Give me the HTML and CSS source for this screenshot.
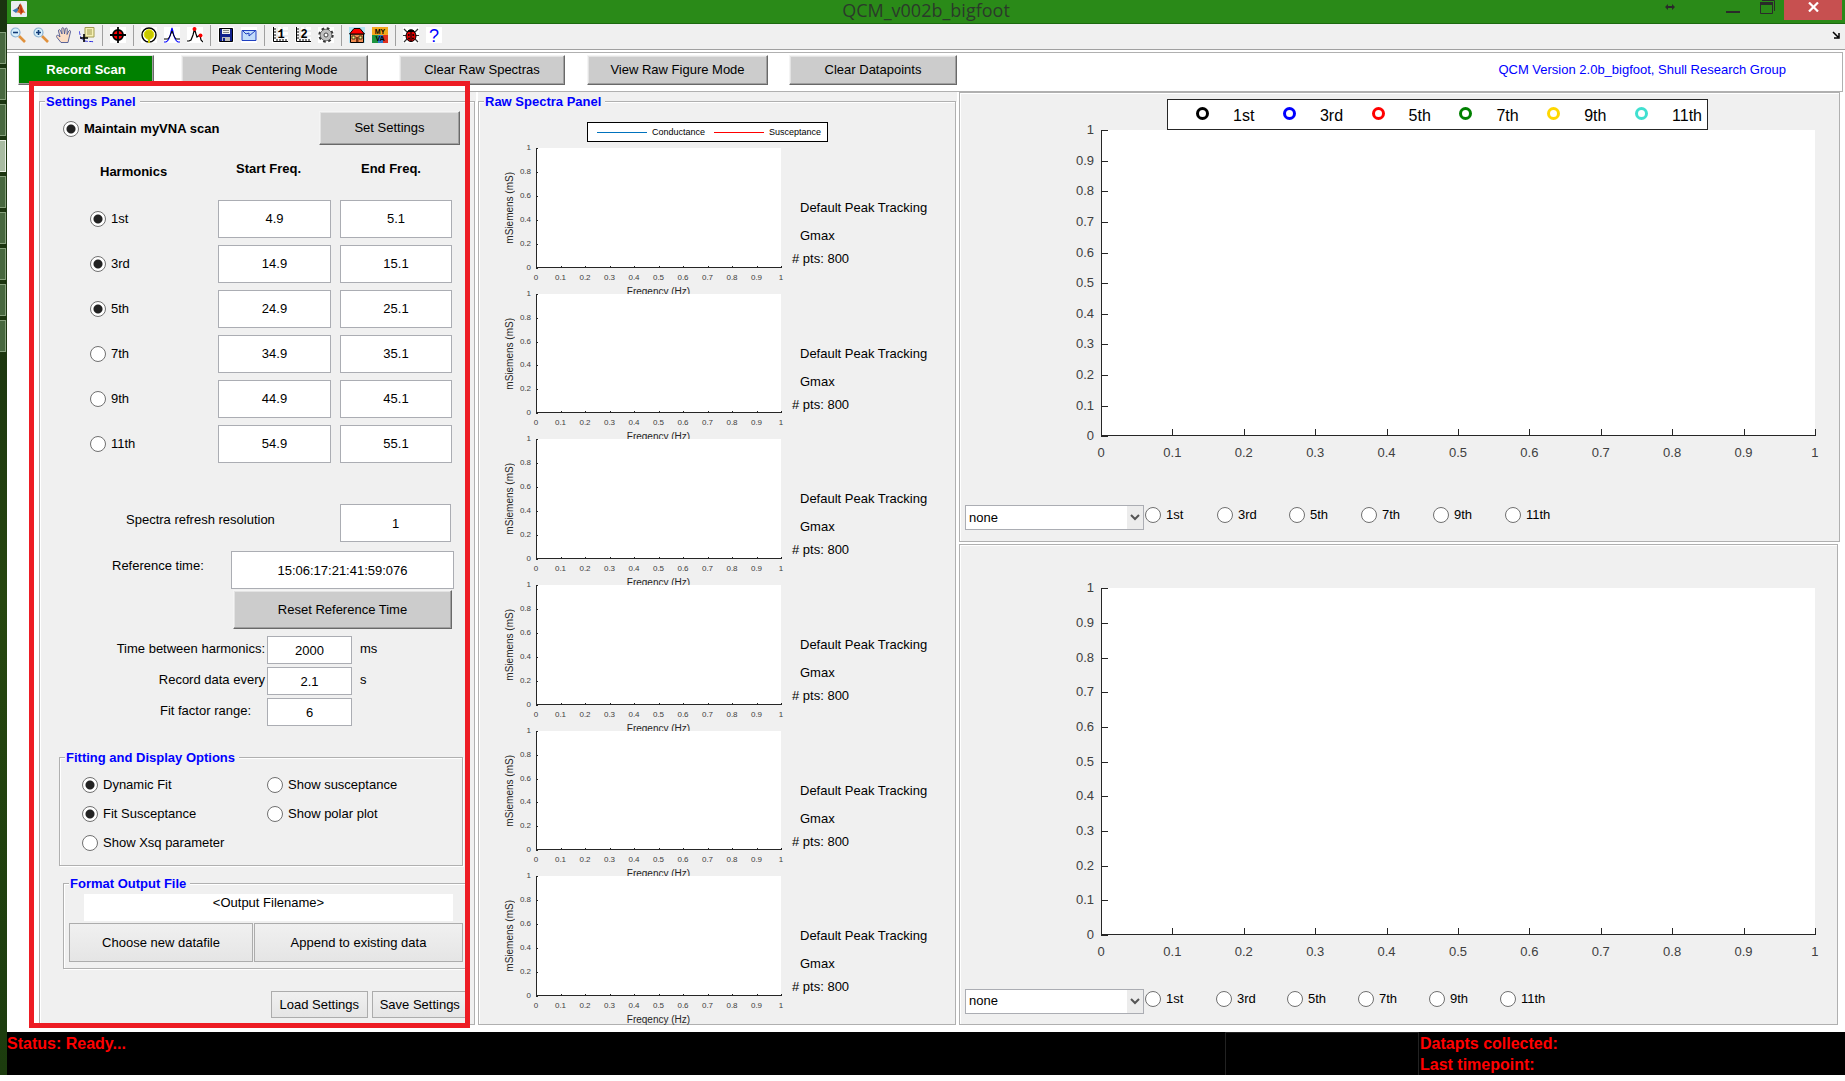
FILE: index.html
```html
<!DOCTYPE html>
<html lang="en">
<head>
<meta charset="utf-8">
<title>QCM_v002b_bigfoot</title>
<link rel="stylesheet" href="styles.css">
</head>
<body>
<div class="desktop">
  <div class="thumbs" aria-hidden="true">
    <span class="thumb"></span><span class="thumb"></span><span class="thumb"></span><span class="thumb thumb-active"></span><span class="thumb"></span><span class="thumb"></span><span class="thumb"></span><span class="thumb"></span><span class="thumb"></span>
  </div>
  <div class="window">
    <header class="titlebar">
      <svg class="app-icon" viewBox="0 0 16 16"><rect width="16" height="16" rx="1" fill="#e9eef3"/><path d="M1.500 9.500 6 7l2 2-3 3z" fill="#3c78b4"/><path d="M6 7c2-1 2-4 3.500-4.500L8 9z" fill="#5a2a20"/><path d="M9.500 2.500C11 4 12 9 14.500 12c-2-1-3-1-4.500 2-1-2-2-3-5-2 2-1 4-6 4.500-9.500z" fill="#e0651c"/><path d="M9.500 2.500C10.500 5 10.500 9 12 11c-1 0-2 1-2 3-.5-3-1-5-.5-11.500z" fill="#b5301a"/></svg>
      <h1 class="window-title">QCM_v002b_bigfoot</h1>
      <div class="window-controls">
        <svg class="resize-mark" viewBox="0 0 10 8"><path d="M0 4 3 1v2h4V1l3 3-3 3V5H3v2z" fill="#2a2a2a"/></svg>
        <button class="ctl" aria-label="Minimize"><svg width="14" height="14" viewBox="0 0 14 14"><path d="M0 12h14" stroke="#2a2a2a" stroke-width="2"/></svg></button>
        <button class="ctl" aria-label="Restore"><svg width="15" height="14" viewBox="0 0 15 14"><path d="M2 .5h12.500V11M.5 2.500h12v11H.5z" fill="none" stroke="#2a2a2a"/><path d="M0 3.500h13" stroke="#2a2a2a" stroke-width="3"/></svg></button>
        <button class="ctl ctl-close" aria-label="Close"><svg width="11" height="10" viewBox="0 0 11 10"><path d="m1 .5 9 9m0-9-9 9" stroke="#fff" stroke-width="2.200"/></svg></button>
      </div>
    </header>

    <div class="toolbar" role="toolbar" aria-label="Figure tools">
      <button class="tool" aria-label="Zoom out"><svg viewBox="0 0 16 16"><path d="m9 9 6 6" stroke="#e0913c" stroke-width="2.600"/><circle cx="5.500" cy="5.500" r="4.500" fill="#d9f0fb" stroke="#8ab0d0" stroke-width="1.200"/><path d="M3 5.500h5" stroke="#123c78" stroke-width="1.600"/></svg></button>
      <button class="tool" aria-label="Zoom in"><svg viewBox="0 0 16 16"><path d="m9 9 6 6" stroke="#e0913c" stroke-width="2.600"/><circle cx="5.500" cy="5.500" r="4.500" fill="#d9f0fb" stroke="#8ab0d0" stroke-width="1.200"/><path d="M3 5.500h5M5.500 3v5" stroke="#123c78" stroke-width="1.600"/></svg></button>
      <button class="tool" aria-label="Pan"><svg viewBox="0 0 16 16"><path d="M5 15.500 1 10.500c-1.500-2 .5-3 2-1.500L4 10 2.500 4c-.3-1.600 1.500-1.800 2-.5L6 7 5.800 1.800c0-1.500 1.900-1.500 2.100 0L8.500 7l.8-5c.3-1.400 2-1.200 2 .2L11 7.500l1.700-3.400c.7-1.300 2.200-.6 1.800.7L13 11l-1 4.500z" fill="#fbdcc4" stroke="#4a5690" stroke-width=".9"/></svg></button>
      <button class="tool" aria-label="Data cursor"><svg viewBox="0 0 16 16"><path d="M0 4c1 2 1 9 6 10s6 0 9 1" fill="none" stroke="#2a2ae0" stroke-dasharray="4 1.500"/><path d="M6 .5h9v9.500H6z" fill="#f5f0b4" stroke="#a09a50"/><path d="M8 3h5M8 5h5M8 7h5" stroke="#a09a50"/><path d="M5 7v8M1 11h8" stroke="#000" stroke-width="1.600"/></svg></button>
      <span class="sep"></span>
      <button class="tool tool-white" aria-label="Center peak"><svg viewBox="0 0 16 16"><circle cx="8" cy="8" r="5" fill="#f00" stroke="#000" stroke-width="1.800"/><path d="M8 0v16M0 8h16" stroke="#000" stroke-width="1.800"/></svg></button>
      <span class="sep"></span>
      <button class="tool tool-white" aria-label="Polar fit"><svg viewBox="0 0 16 16"><circle cx="8" cy="8" r="7" fill="#fff" stroke="#000" stroke-width="1.400"/><circle cx="8" cy="7.500" r="4.800" fill="#c8c800" stroke="#e6e600"/><path d="M8 10v6" stroke="#c8c800" stroke-width="2"/></svg></button>
      <button class="tool tool-white" aria-label="Show peak"><svg viewBox="0 0 16 16"><path d="M0 15h2c3-1 4-5 5-10l1-4 1 4c1 5 2 9 5 10h2" fill="none" stroke="#00f" stroke-width="1.200"/><path d="M0 12h4l2-3 2-5 2 5 2 3h4" fill="none" stroke="#000"/></svg></button>
      <button class="tool tool-white" aria-label="Find peaks"><svg viewBox="0 0 16 16"><path d="M0 14h2l2-1 2-5 1.500-6L9 7l1 3 1.500-1L13 8l1 5 2 2" fill="none" stroke="#000" stroke-width="1.200"/><circle cx="7.500" cy="2" r="2" fill="#f00"/><circle cx="13.500" cy="8.500" r="2" fill="#f00"/></svg></button>
      <span class="sep"></span>
      <button class="tool tool-white" aria-label="Save"><svg viewBox="0 0 16 16"><path d="M1.500 1.500h13v13h-13z" fill="#10208c" stroke="#000"/><path d="M4 2h8v5H4z" fill="#f0f0f0"/><path d="M5 3.500h6M5 5.500h6" stroke="#888"/><path d="M4 10h8v4H4z" fill="#bbb"/><path d="M5 11h2v3H5z" fill="#10208c"/></svg></button>
      <button class="tool tool-white" aria-label="Mail"><svg viewBox="0 0 16 16"><path d="M1 3.500h14v10H1z" fill="#c2dcfa" stroke="#2040c0"/><path d="m2 4 3 3 3-1 0 3 6-5" fill="none" stroke="#2040c0"/></svg></button>
      <span class="sep"></span>
      <button class="tool tool-white" aria-label="Axis 1"><svg viewBox="0 0 16 16"><path d="M5 0v13M10 0v13M2 4h14M2 9h14" stroke="#ddd"/><path d="M1.500 0v14.500H16M1 2h3M1 5h3M1 8h3M1 11h3M5 12v3M8 12v3M11 12v3M14 12v3" fill="none" stroke="#000"/><text x="9" y="11" class="ico-num">1</text></svg></button>
      <button class="tool tool-white" aria-label="Axis 2"><svg viewBox="0 0 16 16"><path d="M5 0v13M10 0v13M2 4h14M2 9h14" stroke="#ddd"/><path d="M1.500 0v14.500H16M1 2h3M1 5h3M1 8h3M1 11h3M5 12v3M8 12v3M11 12v3M14 12v3" fill="none" stroke="#000"/><text x="9" y="11" class="ico-num">2</text></svg></button>
      <button class="tool tool-white" aria-label="Options"><svg viewBox="0 0 16 16"><circle cx="8" cy="8" r="6.500" fill="none" stroke="#333" stroke-width="2.400" stroke-dasharray="2.600 2.500"/><circle cx="8" cy="8" r="5.800" fill="#c0c0c0" stroke="#555" stroke-width=".8"/><circle cx="8" cy="8" r="2" fill="#fff" stroke="#444"/></svg></button>
      <span class="sep"></span>
      <button class="tool" aria-label="Home"><svg viewBox="0 0 16 16"><path d="M0 0h16v16H0z" fill="#b4e4f4"/><path d="M1.500 7h13v8.500h-13z" fill="#f08c50" stroke="#000"/><path d="M.5 7 5 1.500h6L15.500 7z" fill="#f00" stroke="#000"/><path d="M3 9h3v3H3zm7 0h3v3h-3z" fill="#fff080" stroke="#000" stroke-width=".7"/><path d="M7 10h2.500v5H7z" fill="#7a3010"/></svg></button>
      <button class="tool" aria-label="myVNA"><svg viewBox="0 0 16 16"><path d="M0 0h16v8H0z" fill="#f5a81c"/><path d="M0 8h6v8H0z" fill="#1c9440"/><path d="M6 8h5v8H6z" fill="#2878c8"/><path d="M11 8h5v8h-5z" fill="#e03020"/><text x="8" y="7" class="ico-word">MY</text><text x="8" y="14" class="ico-word">VA</text></svg></button>
      <span class="sep"></span>
      <button class="tool tool-white" aria-label="Debug"><svg viewBox="0 0 16 16"><path d="m1 2 4 4M15 2l-4 4M0 8.500h16M1 15l4-4m10 4-4-4" stroke="#333" stroke-width="1.200"/><ellipse cx="8" cy="9" rx="5" ry="5.500" fill="#e00000" stroke="#000"/><path d="M4.500 4.500a4 3.500 0 0 1 7 0zM8 4v11" fill="#000" stroke="#000"/><circle cx="5.800" cy="8" r=".9"/><circle cx="10.200" cy="8" r=".9"/><circle cx="6" cy="11.500" r=".9"/><circle cx="10" cy="11.500" r=".9"/></svg></button>
      <button class="tool tool-white" aria-label="Help"><svg viewBox="0 0 16 16"><text x="8" y="15" class="ico-help">?</text></svg></button>
      <svg class="dock-mark" viewBox="0 0 8 8"><path d="m1 1 5 5M2 7h5V2" fill="none" stroke="#000" stroke-width="1.500"/></svg>
    </div>

    <div class="actions">
      <button class="btn btn-record">Record Scan</button>
      <button class="btn btn-peak">Peak Centering Mode</button>
      <button class="btn btn-clear-raw">Clear Raw Spectras</button>
      <button class="btn btn-view">View Raw Figure Mode</button>
      <button class="btn btn-clear-data">Clear Datapoints</button>
      <p class="version">QCM Version 2.0b_bigfoot, Shull Research Group</p>
    </div>

    <main class="main">
      <section class="panel">
        <fieldset class="group group-fill">
          <legend>Settings Panel</legend>
          <div class="scan-row">
            <label class="choice choice-bold"><input type="radio" checked>Maintain myVNA scan</label>
            <button class="btn btn-set">Set Settings</button>
          </div>
          <table class="harmonics">
            <thead><tr><th class="col-name">Harmonics</th><th class="col-start">Start Freq.</th><th class="col-end">End Freq.</th></tr></thead>
            <tbody>
              <tr><td><label class="choice"><input type="radio" checked>1st</label></td><td><input class="field" aria-label="1st start" value="4.9"></td><td><input class="field" aria-label="1st end" value="5.1"></td></tr>
              <tr><td><label class="choice"><input type="radio" checked>3rd</label></td><td><input class="field" aria-label="3rd start" value="14.9"></td><td><input class="field" aria-label="3rd end" value="15.1"></td></tr>
              <tr><td><label class="choice"><input type="radio" checked>5th</label></td><td><input class="field" aria-label="5th start" value="24.9"></td><td><input class="field" aria-label="5th end" value="25.1"></td></tr>
              <tr><td><label class="choice"><input type="radio">7th</label></td><td><input class="field" aria-label="7th start" value="34.9"></td><td><input class="field" aria-label="7th end" value="35.1"></td></tr>
              <tr><td><label class="choice"><input type="radio">9th</label></td><td><input class="field" aria-label="9th start" value="44.9"></td><td><input class="field" aria-label="9th end" value="45.1"></td></tr>
              <tr><td><label class="choice"><input type="radio">11th</label></td><td><input class="field" aria-label="11th start" value="54.9"></td><td><input class="field" aria-label="11th end" value="55.1"></td></tr>
            </tbody>
          </table>
          <div class="line line-refresh"><label for="refresh">Spectra refresh resolution</label><input class="field" id="refresh" value="1"></div>
          <div class="line line-ref"><label for="reftime">Reference time:</label><input class="field field-wide" id="reftime" value="15:06:17:21:41:59:076"></div>
          <button class="btn btn-reset">Reset Reference Time</button>
          <div class="timing">
            <div class="timing-row"><label for="between">Time between harmonics:</label><input class="field field-short" id="between" value="2000"><span class="unit">ms</span></div>
            <div class="timing-row"><label for="every">Record data every</label><input class="field field-short" id="every" value="2.1"><span class="unit">s</span></div>
            <div class="timing-row"><label class="label-fit" for="factor">Fit factor range:</label><input class="field field-short" id="factor" value="6"></div>
          </div>
          <fieldset class="group options">
            <legend>Fitting and Display Options</legend>
            <div class="option-grid">
              <label class="choice"><input type="radio" checked>Dynamic Fit</label>
              <label class="choice"><input type="radio">Show susceptance</label>
              <label class="choice"><input type="radio" checked>Fit Susceptance</label>
              <label class="choice"><input type="radio">Show polar plot</label>
              <label class="choice"><input type="radio">Show Xsq parameter</label>
            </div>
          </fieldset>
          <fieldset class="group output">
            <legend>Format Output File</legend>
            <output class="filename">&lt;Output Filename&gt;</output>
            <div class="file-buttons"><button class="btn-flat">Choose new datafile</button><button class="btn-flat">Append to existing data</button></div>
          </fieldset>
          <div class="save-row"><button class="btn-flat">Load Settings</button><button class="btn-flat">Save Settings</button></div>
        </fieldset>
      </section>

      <section class="panel">
        <fieldset class="group group-fill">
          <legend>Raw Spectra Panel</legend>
          <div class="spectra-key"><span class="key-line"></span>Conductance<span class="key-line key-red"></span>Susceptance</div>
          <div class="spectra">
            <article class="spectrum">
              <div class="y-title">mSiemens (mS)</div>
              <ol class="y-ticks"><li>1</li><li>0.8</li><li>0.6</li><li>0.4</li><li>0.2</li><li>0</li></ol>
              <div class="area"></div>
              <div class="x-axis"><ol class="x-ticks"><li>0</li><li>0.1</li><li>0.2</li><li>0.3</li><li>0.4</li><li>0.5</li><li>0.6</li><li>0.7</li><li>0.8</li><li>0.9</li><li>1</li></ol><div class="x-title">Freqency (Hz)</div></div>
              <div class="notes"><p>Default Peak Tracking</p><p>Gmax</p><p class="pts"># pts: 800</p></div>
            </article>
            <article class="spectrum">
              <div class="y-title">mSiemens (mS)</div>
              <ol class="y-ticks"><li>1</li><li>0.8</li><li>0.6</li><li>0.4</li><li>0.2</li><li>0</li></ol>
              <div class="area"></div>
              <div class="x-axis"><ol class="x-ticks"><li>0</li><li>0.1</li><li>0.2</li><li>0.3</li><li>0.4</li><li>0.5</li><li>0.6</li><li>0.7</li><li>0.8</li><li>0.9</li><li>1</li></ol><div class="x-title">Freqency (Hz)</div></div>
              <div class="notes"><p>Default Peak Tracking</p><p>Gmax</p><p class="pts"># pts: 800</p></div>
            </article>
            <article class="spectrum">
              <div class="y-title">mSiemens (mS)</div>
              <ol class="y-ticks"><li>1</li><li>0.8</li><li>0.6</li><li>0.4</li><li>0.2</li><li>0</li></ol>
              <div class="area"></div>
              <div class="x-axis"><ol class="x-ticks"><li>0</li><li>0.1</li><li>0.2</li><li>0.3</li><li>0.4</li><li>0.5</li><li>0.6</li><li>0.7</li><li>0.8</li><li>0.9</li><li>1</li></ol><div class="x-title">Freqency (Hz)</div></div>
              <div class="notes"><p>Default Peak Tracking</p><p>Gmax</p><p class="pts"># pts: 800</p></div>
            </article>
            <article class="spectrum">
              <div class="y-title">mSiemens (mS)</div>
              <ol class="y-ticks"><li>1</li><li>0.8</li><li>0.6</li><li>0.4</li><li>0.2</li><li>0</li></ol>
              <div class="area"></div>
              <div class="x-axis"><ol class="x-ticks"><li>0</li><li>0.1</li><li>0.2</li><li>0.3</li><li>0.4</li><li>0.5</li><li>0.6</li><li>0.7</li><li>0.8</li><li>0.9</li><li>1</li></ol><div class="x-title">Freqency (Hz)</div></div>
              <div class="notes"><p>Default Peak Tracking</p><p>Gmax</p><p class="pts"># pts: 800</p></div>
            </article>
            <article class="spectrum">
              <div class="y-title">mSiemens (mS)</div>
              <ol class="y-ticks"><li>1</li><li>0.8</li><li>0.6</li><li>0.4</li><li>0.2</li><li>0</li></ol>
              <div class="area"></div>
              <div class="x-axis"><ol class="x-ticks"><li>0</li><li>0.1</li><li>0.2</li><li>0.3</li><li>0.4</li><li>0.5</li><li>0.6</li><li>0.7</li><li>0.8</li><li>0.9</li><li>1</li></ol><div class="x-title">Freqency (Hz)</div></div>
              <div class="notes"><p>Default Peak Tracking</p><p>Gmax</p><p class="pts"># pts: 800</p></div>
            </article>
            <article class="spectrum">
              <div class="y-title">mSiemens (mS)</div>
              <ol class="y-ticks"><li>1</li><li>0.8</li><li>0.6</li><li>0.4</li><li>0.2</li><li>0</li></ol>
              <div class="area"></div>
              <div class="x-axis"><ol class="x-ticks"><li>0</li><li>0.1</li><li>0.2</li><li>0.3</li><li>0.4</li><li>0.5</li><li>0.6</li><li>0.7</li><li>0.8</li><li>0.9</li><li>1</li></ol><div class="x-title">Freqency (Hz)</div></div>
              <div class="notes"><p>Default Peak Tracking</p><p>Gmax</p><p class="pts"># pts: 800</p></div>
            </article>
          </div>
        </fieldset>
      </section>

      <div class="charts">
        <section class="chart chart-upper">
          <ul class="chart-key">
            <li class="k1">1st</li><li class="k3">3rd</li><li class="k5">5th</li><li class="k7">7th</li><li class="k9">9th</li><li class="k11">11th</li>
          </ul>
          <div class="chart-plot">
            <ol class="y-ticks"><li>1</li><li>0.9</li><li>0.8</li><li>0.7</li><li>0.6</li><li>0.5</li><li>0.4</li><li>0.3</li><li>0.2</li><li>0.1</li><li>0</li></ol>
            <div class="area"></div>
            <div class="x-axis"><ol class="x-ticks"><li>0</li><li>0.1</li><li>0.2</li><li>0.3</li><li>0.4</li><li>0.5</li><li>0.6</li><li>0.7</li><li>0.8</li><li>0.9</li><li>1</li></ol></div>
          </div>
          <div class="chart-controls">
            <span class="select"><select aria-label="Upper plot variable"><option>none</option></select><svg viewBox="0 0 16 23"><path d="m4 9 4 4 4-4" fill="none" stroke="#555" stroke-width="2"/></svg></span>
            <div class="series">
              <label class="choice"><input type="radio">1st</label><label class="choice"><input type="radio">3rd</label><label class="choice"><input type="radio">5th</label><label class="choice"><input type="radio">7th</label><label class="choice"><input type="radio">9th</label><label class="choice"><input type="radio">11th</label>
            </div>
          </div>
        </section>
        <section class="chart chart-lower">
          <div class="chart-plot">
            <ol class="y-ticks"><li>1</li><li>0.9</li><li>0.8</li><li>0.7</li><li>0.6</li><li>0.5</li><li>0.4</li><li>0.3</li><li>0.2</li><li>0.1</li><li>0</li></ol>
            <div class="area"></div>
            <div class="x-axis"><ol class="x-ticks"><li>0</li><li>0.1</li><li>0.2</li><li>0.3</li><li>0.4</li><li>0.5</li><li>0.6</li><li>0.7</li><li>0.8</li><li>0.9</li><li>1</li></ol></div>
          </div>
          <div class="chart-controls">
            <span class="select"><select aria-label="Lower plot variable"><option>none</option></select><svg viewBox="0 0 16 23"><path d="m4 9 4 4 4-4" fill="none" stroke="#555" stroke-width="2"/></svg></span>
            <div class="series">
              <label class="choice"><input type="radio">1st</label><label class="choice"><input type="radio">3rd</label><label class="choice"><input type="radio">5th</label><label class="choice"><input type="radio">7th</label><label class="choice"><input type="radio">9th</label><label class="choice"><input type="radio">11th</label>
            </div>
          </div>
        </section>
      </div>
      <div class="highlight" aria-hidden="true"></div>
    </main>

    <footer class="status">
      <p class="status-text">Status: Ready...</p>
      <div class="status-cell"></div>
      <div class="status-data"><p>Datapts collected:</p><p>Last timepoint:</p></div>
    </footer>
  </div>
</div>
</body>
</html>
```
FILE: styles.css
```css
*, *::before { box-sizing: border-box; }
body { margin: 0; background: #fff; color: #000; font: 13px/16px "Liberation Sans", Arial, sans-serif; }
p, ol, ul, h1 { margin: 0; padding: 0; list-style: none; }
button, input, select { font: inherit; color: inherit; margin: 0; border-radius: 0; }

.desktop { display: flex; min-height: 100vh; padding-bottom: 6px; }
.thumbs { flex: 0 0 7px; display: flex; flex-direction: column; gap: 4px; padding: 32px 1px 0 0; background: linear-gradient(#1a3410 0, #1c360f 350px, #26460f 600px, #1c3c0e); }
.thumb { height: 32px; background: #48683f; border: 1px solid #86a07c; border-left: 0; }
.thumb-active { background: #a9bca2; border-color: #e8efe4; }
.window { flex: 1; min-width: 0; display: flex; flex-direction: column; }

/* title bar */
.titlebar { height: 24px; display: flex; align-items: flex-start; justify-content: space-between; background: #2a8a18; border-bottom: 1px solid #1c6a10; padding: 0 3px 0 4px; }
.app-icon { width: 16px; height: 16px; margin-top: 1px; }
.window-title { flex: 1; padding-left: 160px; text-align: center; font: 18px/21px "Open Sans", sans-serif; color: #2a3a2a; }
.window-controls { display: flex; align-items: flex-start; }
.resize-mark { width: 10px; height: 8px; margin: 3px 41px 0 0; }
.ctl { display: flex; justify-content: center; height: 20px; width: 34px; padding: 0; border: 0; background: none; }
.ctl-close { width: 58px; padding-top: 2px; background: #c75050; }

/* toolbar */
.toolbar { height: 28px; display: flex; align-items: center; gap: 7px; padding: 0 5px 6px 3px; background: linear-gradient(#f0f0f0 25px, #a0a0a0 25px 26px, #fff 26px); }
.tool { width: 16px; height: 16px; padding: 0; border: 0; background: none; }
.tool svg { display: block; width: 16px; height: 16px; }
.tool-white { background: #fff; }
.sep { width: 1px; height: 21px; background: #a0a0a0; }
.ico-num { font: bold 12px "Liberation Mono", monospace; text-anchor: middle; }
.ico-word { font: bold 7px "Liberation Sans", sans-serif; text-anchor: middle; }
.ico-help { font: 18px "Liberation Sans", sans-serif; text-anchor: middle; fill: #00f; }
.dock-mark { width: 8px; height: 8px; margin-left: auto; }

/* buttons */
.btn { padding: 0; background: #ccc; border: 1px solid; border-color: #f4f4f4 #696969 #696969 #f4f4f4; box-shadow: inset -1px -1px #a0a0a0, inset 1px 1px #e3e3e3; }
.btn-flat { height: 39px; padding: 1px 0 0; background: linear-gradient(#f0f0f0, #e5e5e5); border: 1px solid #acacac; }

.actions { display: flex; align-items: center; height: 40px; margin-right: 2px; padding: 0 56px 4px 11px; border: solid #b0b0b0; border-width: 1px 1px 1px 0; }
.actions .btn { height: 30px; }
.actions .btn-record { width: 136px; margin-right: 27px; background: #008000; color: #fff; font-weight: bold; box-shadow: inset -1px -1px #a0a0a0; border-color: #e3e3e3 #696969 #696969 #e3e3e3; }
.btn-peak { width: 187px; margin-right: 31px; }
.btn-clear-raw { width: 166px; margin-right: 22px; }
.btn-view { width: 181px; margin-right: 21px; }
.btn-clear-data { width: 168px; }
.version { margin-left: auto; color: #00f; }

/* main area */
.main { position: relative; flex: 1; display: grid; grid-template-columns: 437px 479fr 881fr; gap: 2px; padding: 0 5px 7px 32px; }
.highlight { position: absolute; left: 22px; top: -11px; bottom: 4px; width: 441px; border: 5px solid #ed1c24; pointer-events: none; }
.panel { display: flex; background: #f0f0f0; padding: 1px 1px 0 0; }
.group { min-width: 0; margin: 0; padding: 0; border: 1px solid #b0b0b0; box-shadow: 1px 1px #fff, inset 1px 1px #fff; }
.group-fill { flex: 1; display: flex; flex-direction: column; }
legend { margin-left: 5px; padding: 2px 4px 0 1px; line-height: 14px; background: #f0f0f0; color: #00f; font-weight: bold; }

.choice { display: flex; align-items: center; gap: 5px; }
.choice-bold { padding-top: 2px; font-weight: bold; }
input[type="radio"] { appearance: none; flex: none; width: 16px; height: 16px; border: 1px solid #707070; border-radius: 50%; background: #fff; }
input[type="radio"]:checked { background: radial-gradient(circle, #222 0 4px, #fff 5px); }
.field { width: 100%; height: 38px; padding: 0; text-align: center; background: #fff; border: 1px solid #abadb3; }

.scan-row { display: flex; justify-content: space-between; align-items: center; margin-top: 2px; padding: 0 14px 0 23px; }
.btn-set { width: 141px; height: 34px; }
.harmonics { table-layout: fixed; width: 362px; margin-left: 50px; border-collapse: collapse; }
.harmonics th { height: 51px; padding: 16px 0 0; vertical-align: top; text-align: left; }
.harmonics .col-name { width: 128px; padding: 19px 0 0 10px; }
.harmonics .col-start { width: 122px; padding-left: 18px; }
.harmonics .col-end { padding-left: 21px; }
.harmonics td { height: 45px; padding: 0; }
.harmonics td:nth-child(2) { padding-right: 9px; }

.line { display: flex; }
.line label { flex: none; padding-top: 8px; }
.line-refresh { margin-top: 38px; padding: 0 23px 0 86px; }
.line-refresh label { width: 214px; }
.line-ref { margin-top: 9px; padding: 0 20px 0 72px; }
.line-ref label { width: 119px; padding-top: 7px; }
.btn-reset { width: 219px; height: 39px; margin: 1px 0 0 193px; }
.timing { display: flex; flex-direction: column; gap: 3px; margin-top: 7px; }
.timing-row { display: flex; }
.timing label { width: 227px; padding-right: 2px; line-height: 26px; text-align: right; }
.timing .label-fit { padding-right: 16px; }
.field-short { width: 85px; height: 28px; }
.unit { margin-left: 8px; line-height: 26px; }

.options { margin: 23px 11px 0 19px; }
.option-grid { display: grid; grid-template-columns: 185px 1fr; grid-auto-rows: 29px; padding: 5px 0 8px 22px; }
.output { margin: 9px 6px 0 23px; }
.filename { display: block; height: 27px; margin: 3px 14px 2px 20px; padding-top: 1px; background: #fff; text-align: center; }
.file-buttons { display: grid; grid-template-columns: 184px 1fr; gap: 1px; padding: 0 4px 6px 5px; }
.save-row { display: grid; grid-template-columns: 1fr 1fr; gap: 4px; margin: 22px 6px 6px 231px; }
.save-row .btn-flat { height: 27px; }

/* shared axes */
.area { grid-area: area; background: #fff; border: solid #262626; border-width: 0 0 1px 1px; }
.y-ticks { grid-area: yt; display: flex; flex-direction: column; justify-content: space-between; text-align: right; color: #404040; }
.y-ticks li { position: relative; height: 0; line-height: 0; }
.y-ticks li::before { content: ""; position: absolute; height: 1px; background: #262626; }
.x-axis { grid-area: xa; }
.x-ticks { display: flex; justify-content: space-between; color: #404040; }
.x-ticks li { position: relative; display: flex; justify-content: center; width: 0; }
.x-ticks li::before { content: ""; position: absolute; left: 0; width: 1px; background: #262626; }

/* raw spectra */
.spectra-key { display: flex; align-items: center; gap: 5px; width: 241px; height: 20px; margin: 13px 0 6px 108px; padding-left: 9px; background: #fff; border: 1px solid #000; font-size: 9px; }
.key-line { width: 50px; height: 1px; margin-top: 1px; background: #0072bd; }
.key-red { margin-left: 4px; background: #f00; }
.spectra { flex: 1; display: grid; grid-auto-rows: 1fr; padding-bottom: 2px; }
.spectrum { display: grid; grid-template: "yl yt area notes" 1fr ". . xa notes" 26px / 37px 20px 1fr 174px; min-height: 140px; font-size: 8px; }
.y-title { grid-area: yl; justify-self: end; writing-mode: vertical-rl; transform: rotate(180deg); text-align: center; font-size: 10px; line-height: 13px; color: #262626; }
.spectrum .y-ticks { padding-right: 5px; }
.spectrum .y-ticks li::before { left: calc(100% + 5px); width: 2px; }
.spectrum .x-ticks { height: 16px; line-height: 20px; }
.spectrum .x-ticks li::before { top: -2px; height: 2px; }
.x-title { text-align: center; font-size: 10px; line-height: 16px; color: #262626; }
.notes { grid-area: notes; padding: 52px 0 0 19px; font-size: 13px; }
.notes p { margin-bottom: 12px; }
.notes .pts { margin: -5px 0 0 -8px; }

/* result charts */
.charts { display: grid; grid-template-rows: 450fr 480fr; gap: 2px; }
.chart { display: flex; flex-direction: column; background: #f0f0f0; border: 1px solid #b0b0b0; box-shadow: inset 1px 1px #fff; }
.chart-upper { padding: 6px 0 11px; }
.chart-lower { margin-right: 2px; padding: 43px 0 10px; }
.chart-plot { flex: 1; display: grid; grid-template: "yt area" 1fr ". xa" 69px / 141px 1fr; padding-right: 24px; }
.chart-lower .chart-plot { grid-template-rows: 1fr 54px; padding-right: 22px; }
.chart-plot .y-ticks { padding-right: 7px; }
.chart-plot .y-ticks li::before { left: calc(100% + 7px); width: 7px; }
.chart-plot .x-ticks { line-height: 33px; }
.chart-plot .x-ticks li::before { top: -7px; height: 7px; }
.chart-key { display: flex; justify-content: space-between; width: 541px; height: 31px; margin-left: 207px; padding: 0 5px 0 28px; background: #fff; border: 1px solid #262626; font-size: 16px; line-height: 31px; }
.chart-key li { display: flex; gap: 24px; }
.chart-key li::before { content: ""; width: 13px; height: 13px; margin-top: 7px; border: 3px solid var(--series); border-radius: 50%; }
.k1 { --series: #000; }
.k3 { --series: #00f; }
.k5 { --series: #f00; }
.k7 { --series: #008000; }
.k9 { --series: #ffd700; }
.k11 { --series: #40e0d0; }
.chart-controls { display: flex; padding-left: 5px; }
.select { display: flex; position: relative; width: 179px; height: 25px; border: 1px solid #abadb3; background: #fff; }
.select select { appearance: none; flex: 1; padding: 0 20px 0 3px; border: 0; background: none; }
.select svg { position: absolute; right: 0; top: 0; width: 16px; height: 23px; background: #ececec; pointer-events: none; }
.series { display: grid; grid-template-columns: repeat(6, 72px); grid-auto-rows: 20px; margin-left: 1px; }
.chart-lower .series { grid-template-columns: repeat(6, 71px); }

/* status bar */
.status { display: flex; min-height: 43px; background: #000; color: #f00; font-size: 16px; line-height: 21px; font-weight: bold; }
.status-text { flex: 1; padding-top: 1px; }
.status-cell { width: 193px; border: solid #222; border-width: 1px 0 0 1px; }
.status-data { width: 427px; padding: 1px 0 0 1px; border-left: 1px solid #222; }
```
